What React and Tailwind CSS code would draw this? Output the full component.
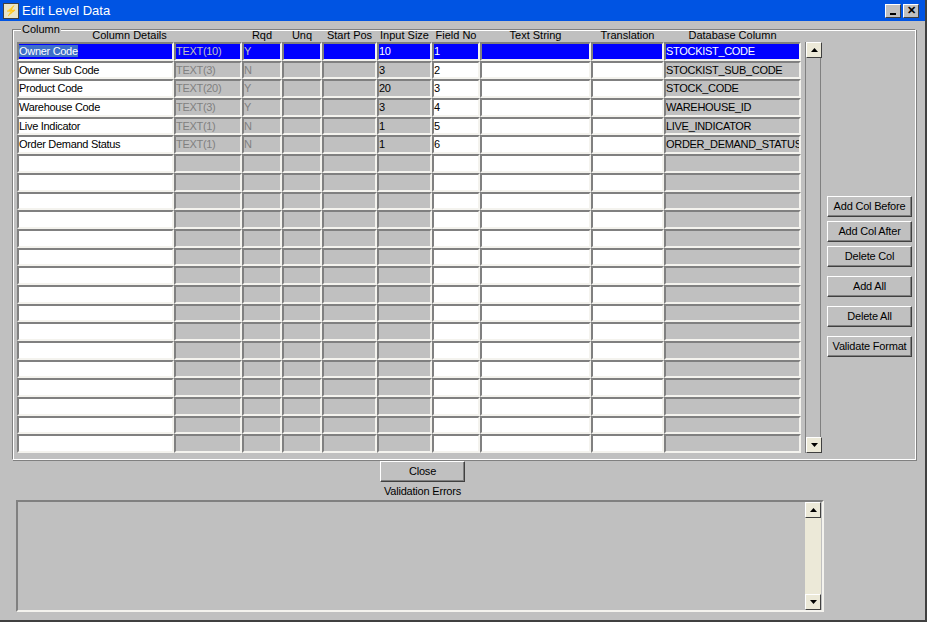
import React from "react";

const cols = [
  { w: 157, white: true, head: "", gtext: false },
  { w: 68, white: false, head: "", gtext: true },
  { w: 40, white: false, head: "Rqd", gtext: true },
  { w: 40, white: false, head: "Unq", gtext: true },
  { w: 55, white: false, head: "Start Pos", gtext: false },
  { w: 55, white: false, head: "Input Size", gtext: false },
  { w: 48, white: true, head: "Field No", gtext: false },
  { w: 111, white: true, head: "Text String", gtext: false },
  { w: 73, white: true, head: "Translation", gtext: false },
  { w: 137, white: false, head: "Database Column", gtext: false },
];

const data = [
  ["Owner Code", "TEXT(10)", "Y", "", "", "10", "1", "", "", "STOCKIST_CODE"],
  ["Owner Sub Code", "TEXT(3)", "N", "", "", "3", "2", "", "", "STOCKIST_SUB_CODE"],
  ["Product Code", "TEXT(20)", "Y", "", "", "20", "3", "", "", "STOCK_CODE"],
  ["Warehouse Code", "TEXT(3)", "Y", "", "", "3", "4", "", "", "WAREHOUSE_ID"],
  ["Live Indicator", "TEXT(1)", "N", "", "", "1", "5", "", "", "LIVE_INDICATOR"],
  ["Order Demand Status", "TEXT(1)", "N", "", "", "1", "6", "", "", "ORDER_DEMAND_STATUS"],
];
const rows = Array.from({ length: 22 }, (_, i) => data[i] || Array(10).fill(""));

const Up = () => (
  <svg width="7" height="4" viewBox="0 0 7 4"><path d="M3.5 0L7 4H0z" fill="#000" /></svg>
);
const Down = () => (
  <svg width="7" height="4" viewBox="0 0 7 4"><path d="M0 0h7L3.5 4z" fill="#000" /></svg>
);

const SBtn = ({ children }) => (
  <div className="w-[16px] h-[16px] bg-[#ece9d8] border border-t-white border-l-white border-b-[#404040] border-r-[#404040] flex items-center justify-center shrink-0">
    {children}
  </div>
);

const Btn = ({ children, w = 85 }) => (
  <div
    className="h-[21px] bg-[#c0c0c0] border border-t-white border-l-white border-b-[#404040] border-r-[#404040] shadow-[inset_-1px_-1px_0_#808080] flex items-center justify-center text-[11px] text-black tracking-[-0.2px]"
    style={{ width: w }}
  >
    {children}
  </div>
);

export default function App() {
  return (
    <div
      className="w-[927px] h-[622px] bg-[#c0c0c0] overflow-hidden relative border-r-2 border-b-2 border-r-[#404040] border-b-[#404040]"
      style={{ fontFamily: '"Liberation Sans", Arial, sans-serif' }}
    >
      <div className="h-[21px] bg-[#0054e3] flex items-center pl-[3px] pr-[6px]">
        <div className="w-[16px] h-[16px] bg-[#e8e4c8] border border-[#404040] flex items-center justify-center text-[10px] font-bold text-[#c00] leading-none">⚡</div>
        <span className="text-white text-[13px] ml-[3px]">Edit Level Data</span>
        <div className="ml-auto flex gap-[2px]">
          <div className="w-[16px] h-[14px] bg-[#c0c0c0] border border-t-white border-l-white border-b-[#404040] border-r-[#404040] flex items-end justify-center pb-[2px]"><div className="w-[6px] h-[2px] bg-black" /></div>
          <div className="w-[16px] h-[14px] bg-[#c0c0c0] border border-t-white border-l-white border-b-[#404040] border-r-[#404040] flex items-center justify-center text-[11px] font-bold leading-none">✕</div>
        </div>
      </div>

      <div className="relative ml-[12px] mt-[8px] w-[904px] h-[431px] border border-t-[#808080] border-l-[#808080] border-b-white border-r-white shadow-[inset_1px_1px_0_white,1px_1px_0_#808080]">
        <span className="absolute -top-[8px] left-[8px] px-[1px] bg-[#c0c0c0] text-[11px] leading-[14px]">Column</span>
        <div className="flex pl-[4px]">
          <div>
            <div className="flex h-[12px]">
              <div className="text-[11px] leading-[12px] text-center mt-[-1px] w-[225px]">Column Details</div>
              {cols.slice(2).map((c, i) => (
                <div key={i} className="text-[11px] leading-[12px] text-center mt-[-1px]" style={{ width: c.w }}>{c.head}</div>
              ))}
            </div>
            {rows.map((r, ri) => (
              <div key={ri} className="flex h-[18.7px]">
                {cols.map((c, ci) => {
                  const sel = ri === 0;
                  const bg = sel ? "bg-[#0000ff]" : c.white ? "bg-white" : "bg-[#c0c0c0]";
                  const tc = sel ? (c.gtext ? "text-[#c0c0c0]" : "text-white") : c.gtext ? "text-[#808080]" : "text-black";
                  return (
                    <div
                      key={ci}
                      className={`${bg} ${tc} border-2 border-t-[#808080] border-l-[#808080] border-b-[#f4f3ee] border-r-[#f4f3ee] text-[11px] leading-[14px] pl-[0px] whitespace-nowrap overflow-hidden tracking-[-0.3px]`}
                      style={{ width: c.w }}
                    >
                      {ci === 0 && sel ? <span className="bg-[#3d6fc9]">{r[ci]}</span> : r[ci]}
                    </div>
                  );
                })}
              </div>
            ))}
          </div>
          <div className="ml-[4px] mt-[12px] w-[16px] h-[411px] flex flex-col bg-[#c0c0c0] border-x border-[#808080]">
            <SBtn><Up /></SBtn>
            <div className="flex-1" />
            <SBtn><Down /></SBtn>
          </div>
          <div className="ml-[6px] mt-[166px] flex flex-col gap-[4px]">
            <Btn>Add Col Before</Btn>
            <Btn>Add Col After</Btn>
            <Btn>Delete Col</Btn>
            <div className="h-[1px]" />
            <Btn>Add All</Btn>
            <div className="h-[1px]" />
            <Btn>Delete All</Btn>
            <div className="h-[1px]" />
            <Btn>Validate Format</Btn>
          </div>
        </div>
      </div>

      <div className="ml-[380px] mt-[1px]"><Btn>Close</Btn></div>
      <div className="ml-[375px] mt-[2px] w-[95px] text-center text-[11px] leading-[14px] tracking-[-0.2px]">Validation Errors</div>
      <div className="ml-[16px] mt-[2px] w-[808px] h-[112px] flex border-2 border-t-[#808080] border-l-[#808080] border-b-[#f4f3ee] border-r-[#f4f3ee] bg-[#c0c0c0]">
        <div className="flex-1" />
        <div className="w-[16px] flex flex-col bg-[#ece9d8] mr-[1px]">
          <SBtn><Up /></SBtn>
          <div className="flex-1" />
          <SBtn><Down /></SBtn>
        </div>
      </div>
    </div>
  );
}
